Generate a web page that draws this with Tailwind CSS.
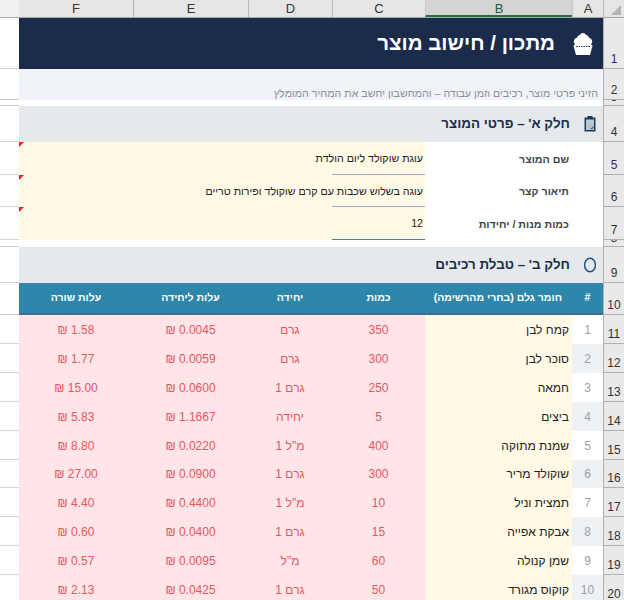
<!DOCTYPE html>
<html lang="he" dir="rtl">

<head>
    <meta charset="UTF-8">
    <title>מתכון / חישוב מוצר</title>
    <script src="https://cdn.jsdelivr.net/npm/@tailwindcss/browser@4"></script>
</head>

<body class="h-[600px] overflow-hidden bg-white font-['Liberation_Sans',sans-serif] text-[12px] text-[#222]">

    <!-- column letters -->
    <div class="flex h-[18px] border-b border-[#a8a8a8] bg-[#e6e6e6] text-[13px] leading-[18px] text-[#333]">
        <div class="w-[21px] border-l border-[#b5b5b5] relative">
            <div class="absolute bottom-[2px] right-[3px] h-0 w-0 border-b-[10px] border-l-[10px] border-b-[#b4b4b4] border-l-transparent"></div>
        </div>
        <div class="w-[31px] border-l border-[#c8c8c8] text-center">A</div>
        <div class="w-[147px] border-l border-[#c8c8c8] border-b-2 border-b-[#217346] bg-[#d4d4d4] text-center text-[#1f5c3a]">B</div>
        <div class="w-[93px] border-l border-[#b5b5b5] text-center">C</div>
        <div class="w-[84px] border-l border-[#b5b5b5] text-center">D</div>
        <div class="w-[115px] border-l border-[#b5b5b5] text-center">E</div>
        <div class="w-[114px] text-center">F</div>
        <div class="w-[19px] bg-[#f1f1f1]"></div>
    </div>

    <div id="sheet">
        <!-- row 1 -->
        <div class="flex h-[51px]">
            <div class="flex w-[21px] items-end justify-center overflow-hidden border-b border-l border-[#b0b0b0] bg-[#e9e9e9] pb-[1px] leading-[15px] text-[#333]">1</div>
            <div class="flex flex-1 items-center gap-[18px] bg-[#1a2b4c] pr-[10px] text-white">
                <svg class="h-[22px] w-[20px] shrink-0" viewBox="0 0 20 22" fill="#fff">
                    <path d="M10 0c1.400 0 2.400.7 3 1.900 1.600.2 2.800 1.300 3 2.900 1.800.5 3.200 1.900 3.200 3.600 0 1.200-.5 2-1.200 2.500L19.600 13l-.7 2-1.900 7H3l-1.900-7-.7-2 1.600-2.100C1.300 10.400.8 9.600.8 8.400c0-1.700 1.400-3.100 3.200-3.600.2-1.600 1.400-2.700 3-2.900C7.600.7 8.600 0 10 0z" />
                    <path d="M3 13.500h14" stroke="#1a2b4c" stroke-width="1" stroke-dasharray="1.500 1" />
                </svg>
                <span class="whitespace-nowrap text-[20.500px] font-bold">מתכון / חישוב מוצר</span>
            </div>
            <div class="w-[19px] border-b border-[#d4d4d4]"></div>
        </div>

        <!-- row 2 -->
        <div class="flex h-[31px]">
            <div class="flex w-[21px] items-end justify-center overflow-hidden border-b border-l border-[#b0b0b0] bg-[#e9e9e9] pb-[1px] leading-[15px] text-[#333]">2</div>
            <div class="flex flex-1 items-end overflow-hidden bg-[#f0f4f8] pr-[5px] text-[10.670px] leading-[13px] text-[#8a8f96]">
                <span class="whitespace-nowrap">הזיני פרטי מוצר, רכיבים וזמן עבודה – והמחשבון יחשב את המחיר המומלץ</span>
            </div>
            <div class="w-[19px] border-b border-[#c8c8c8]"></div>
        </div>

        <!-- row 3 -->
        <div class="flex h-[6px]">
            <div class="flex w-[21px] items-end justify-center overflow-hidden border-b border-l border-[#b0b0b0] bg-[#e9e9e9] leading-[15px] text-[#333]"><span class="shrink-0">3</span></div>
            <div class="flex-1 bg-white"></div>
            <div class="w-[19px] border-b border-[#c8c8c8]"></div>
        </div>

        <!-- row 4 -->
        <div class="flex h-[36px]">
            <div class="flex w-[21px] items-end justify-center overflow-hidden border-b border-l border-[#b0b0b0] bg-[#e9e9e9] pb-[1px] leading-[15px] text-[#333]">4</div>
            <div class="flex flex-1 items-center gap-[14px] bg-[#e5e9ec] pr-[7px] text-[13.400px] font-bold text-[#1a2b4c]">
                <svg class="h-[16px] w-[12px] shrink-0" viewBox="0 0 12 16">
                    <rect x=".5" y="1.500" width="11" height="14" fill="#1f3a5f" />
                    <rect x="2" y="3.500" width="8" height="10.500" fill="#b9c5cf" />
                    <rect x="3.500" y="0" width="5" height="3" fill="#1f3a5f" />
                    <path d="M6.500 12l1.200 1 2-2.500" fill="none" stroke="#1f3a5f" stroke-width="1" />
                </svg>
                <span class="whitespace-nowrap">חלק א' – פרטי המוצר</span>
            </div>
            <div class="w-[19px] border-b border-[#d4d4d4]"></div>
        </div>

        <div id="product"></div>

        <!-- row 8 -->
        <div class="flex h-[7px]">
            <div class="flex w-[21px] items-end justify-center overflow-hidden border-b border-l border-[#b0b0b0] bg-[#e9e9e9] leading-[15px] text-[#333]"><span class="shrink-0">8</span></div>
            <div class="flex-1 bg-white"></div>
            <div class="w-[19px] border-b border-[#c8c8c8]"></div>
        </div>

        <!-- row 9 -->
        <div class="flex h-[36px]">
            <div class="flex w-[21px] items-end justify-center overflow-hidden border-b border-l border-[#b0b0b0] bg-[#e9e9e9] pb-[1px] leading-[15px] text-[#333]">9</div>
            <div class="flex flex-1 items-center gap-[14px] bg-[#e5e9ec] pr-[7px] text-[13.400px] font-bold text-[#1a2b4c]">
                <svg class="h-[16px] w-[12px] shrink-0" viewBox="0 0 12 16">
                    <ellipse cx="6" cy="8" rx="5.400" ry="6.800" fill="none" stroke="#1f4e80" stroke-width="1.400" />
                </svg>
                <span class="whitespace-nowrap">חלק ב' – טבלת רכיבים</span>
            </div>
            <div class="w-[19px] border-b border-[#d4d4d4]"></div>
        </div>

        <!-- row 10 -->
        <div class="flex h-[32px]">
            <div class="flex w-[21px] items-end justify-center overflow-hidden border-b border-l border-[#b0b0b0] bg-[#e9e9e9] pb-[1px] leading-[15px] text-[#333]">10</div>
            <div class="flex flex-1 items-center whitespace-nowrap border-b-2 border-[#3b6f96] bg-[#2e86ab] text-[10.500px] font-bold text-white">
                <div class="w-[31px] text-center">#</div>
                <div class="w-[147px] pr-[10px]">חומר גלם (בחרי מהרשימה)</div>
                <div class="w-[93px] text-center">כמות</div>
                <div class="w-[84px] text-center">יחידה</div>
                <div class="w-[115px] text-center">עלות ליחידה</div>
                <div class="w-[114px] text-center">עלות שורה</div>
            </div>
            <div class="w-[19px] border-b border-[#c8c8c8]"></div>
        </div>

        <div id="items"></div>
    </div>

    <script>
        const product = [
            { row: 5, height: 'h-[33px]', label: 'שם המוצר', value: 'עוגת שוקולד ליום הולדת', line: 'border-[#8fb0c8]' },
            { row: 6, height: 'h-[32px]', label: 'תיאור קצר', value: 'עוגה בשלוש שכבות עם קרם שוקולד ופירות טריים', line: 'border-[#8fb0c8]' },
            { row: 7, height: 'h-[33px]', label: 'כמות מנות / יחידות', value: '12', line: 'border-[#4f7ca3]' }
        ];

        document.getElementById('product').innerHTML = product.map(p => `
            <div class="flex ${p.height}">
                <div class="flex w-[21px] items-end justify-center overflow-hidden border-b border-l border-[#b0b0b0] bg-[#e9e9e9] pb-[1px] leading-[15px] text-[#333]">${p.row}</div>
                <div class="w-[31px] bg-white"></div>
                <div class="flex w-[147px] items-center bg-white pr-[3px] text-[10.670px] font-bold text-[#444]">${p.label}</div>
                <div class="relative flex flex-1 bg-[#fff9e6]">
                    <div class="flex w-[93px] items-center whitespace-nowrap border-b ${p.line} pr-[2px] text-[10.670px] text-[#222]">${p.value}</div>
                    <div class="absolute left-0 top-0 h-0 w-0 border-r-[5px] border-t-[5px] border-r-transparent border-t-[#f01f1f]"></div>
                </div>
                <div class="w-[19px] border-b border-[#d4d4d4]"></div>
            </div>`).join('');

        const items = [
            [11, 'קמח לבן', '350', 'גרם', '0.0045', '1.58'],
            [12, 'סוכר לבן', '300', 'גרם', '0.0059', '1.77'],
            [13, 'חמאה', '250', 'גרם 1', '0.0600', '15.00'],
            [14, 'ביצים', '5', 'יחידה', '1.1667', '5.83'],
            [15, 'שמנת מתוקה', '400', 'מ"ל 1', '0.0220', '8.80'],
            [16, 'שוקולד מריר', '300', 'גרם 1', '0.0900', '27.00'],
            [17, 'תמצית וניל', '10', 'מ"ל 1', '0.4400', '4.40'],
            [18, 'אבקת אפייה', '15', 'גרם 1', '0.0400', '0.60'],
            [19, 'שמן קנולה', '60', 'מ"ל', '0.0095', '0.57'],
            [20, 'קוקוס מגורד', '50', 'גרם 1', '0.0425', '2.13']
        ];

        document.getElementById('items').innerHTML = items.map((it, i) => `
            <div class="flex ${it[0] === 16 ? 'h-[28px]' : 'h-[29px]'}">
                <div class="flex w-[21px] items-end justify-center overflow-hidden border-b border-l border-[#b0b0b0] bg-[#e9e9e9] pb-[1px] leading-[15px] text-[#333]">${it[0]}</div>
                <div class="flex w-[31px] items-center justify-center ${i % 2 ? 'bg-[#eef2f5]' : 'bg-white'} text-[#9aa0a6]">${i + 1}</div>
                <div class="flex w-[147px] items-center bg-[#fff9e6] pr-[3px] text-[#222]">${it[1]}</div>
                <div class="flex flex-1 items-center bg-[#ffe4e8] text-[#e8575f]">
                    <div class="w-[93px] text-center">${it[2]}</div>
                    <div class="w-[84px] text-center">${it[3]}</div>
                    <div class="w-[115px] text-center">${it[4]} ₪</div>
                    <div class="w-[114px] text-center">${it[5]} ₪</div>
                </div>
                <div class="w-[19px] border-b border-[#d4d4d4]"></div>
            </div>`).join('');
    </script>
</body>

</html>
